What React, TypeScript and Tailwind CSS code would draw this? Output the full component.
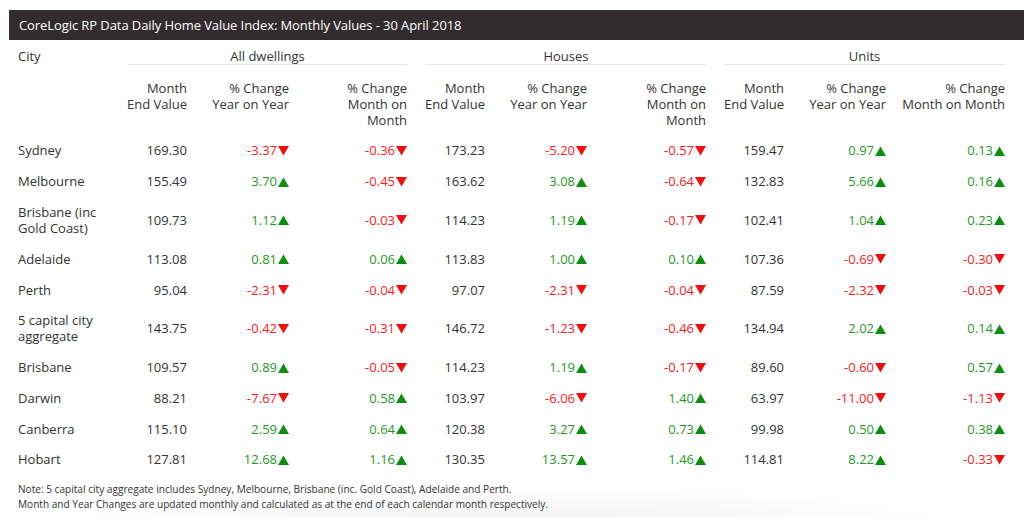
import React from 'react';

type Change = number;
interface Row {
  city: string[];
  all: [number, Change, Change];
  houses: [number, Change, Change];
  units: [number, Change, Change];
}

const rows: Row[] = [
  { city: ['Sydney'], all: [169.3, -3.37, -0.36], houses: [173.23, -5.2, -0.57], units: [159.47, 0.97, 0.13] },
  { city: ['Melbourne'], all: [155.49, 3.7, -0.45], houses: [163.62, 3.08, -0.64], units: [132.83, 5.66, 0.16] },
  { city: ['Brisbane (inc', 'Gold Coast)'], all: [109.73, 1.12, -0.03], houses: [114.23, 1.19, -0.17], units: [102.41, 1.04, 0.23] },
  { city: ['Adelaide'], all: [113.08, 0.81, 0.06], houses: [113.83, 1.0, 0.1], units: [107.36, -0.69, -0.3] },
  { city: ['Perth'], all: [95.04, -2.31, -0.04], houses: [97.07, -2.31, -0.04], units: [87.59, -2.32, -0.03] },
  { city: ['5 capital city', 'aggregate'], all: [143.75, -0.42, -0.31], houses: [146.72, -1.23, -0.46], units: [134.94, 2.02, 0.14] },
  { city: ['Brisbane'], all: [109.57, 0.89, -0.05], houses: [114.23, 1.19, -0.17], units: [89.6, -0.6, 0.57] },
  { city: ['Darwin'], all: [88.21, -7.67, 0.58], houses: [103.97, -6.06, 1.4], units: [63.97, -11.0, -1.13] },
  { city: ['Canberra'], all: [115.1, 2.59, 0.64], houses: [120.38, 3.27, 0.73], units: [99.98, 0.5, 0.38] },
  { city: ['Hobart'], all: [127.81, 12.68, 1.16], houses: [130.35, 13.57, 1.46], units: [114.81, 8.22, -0.33] },
];

const GRID =
  'grid grid-cols-[119px_59px_102px_118px_19px_59px_102px_119px_18px_60px_102px_119px]';

const Arrow = ({ up }: { up: boolean }) => (
  <svg width="11" height="10" viewBox="0 0 11 10" className="inline-block ml-px mb-[2px]">
    {up ? (
      <polygon points="0,10 11,10 5.5,0.5" fill="#0c8f0c" />
    ) : (
      <polygon points="0,0 11,0 5.5,9.5" fill="#f20d0d" />
    )}
  </svg>
);

const ChangeCell = ({ v }: { v: Change }) => {
  const up = v >= 0;
  return (
    <div className={`text-right whitespace-nowrap ${up ? 'text-[#1f9a1f]' : 'text-[#ff1a1a]'}`}>
      {v.toFixed(2)}
      <Arrow up={up} />
    </div>
  );
};

const Group = ({ vals }: { vals: [number, Change, Change] }) => (
  <>
    <div className="text-right">{vals[0].toFixed(2)}</div>
    <ChangeCell v={vals[1]} />
    <ChangeCell v={vals[2]} />
  </>
);

const GroupHead = ({ label }: { label: string }) => (
  <div className="col-span-3 text-center border-b border-[#e6e6e6]">{label}</div>
);

const Head = ({ lines }: { lines: string[] }) => (
  <div className="text-right whitespace-nowrap flex flex-col items-end">
    {lines.map((l) => (
      <span key={l}>{l}</span>
    ))}
  </div>
);

const HeadSet = ({ last }: { last?: boolean }) => (
  <>
    <Head lines={['Month', 'End Value']} />
    <Head lines={['% Change', 'Year on Year']} />
    <Head lines={last ? ['% Change', 'Month on Month'] : ['% Change', 'Month on', 'Month']} />
  </>
);

export default function App() {
  return (
    <div
      className="w-[1024px] h-[517px] overflow-hidden bg-white text-[#333] text-[13px] leading-4"
      style={{ fontFamily: '"Open Sans", "Liberation Sans", sans-serif' }}
    >
      <div className="pl-[9px] pt-[10px]">
        {/* Title bar */}
        <div className="h-[30px] bg-[#322c2e] text-white flex items-center pl-[10px] tracking-[-0.08px]">
          CoreLogic RP Data Daily Home Value Index: Monthly Values - 30 April 2018
        </div>

        {/* Group headers */}
        <div className={`${GRID} pt-2`}>
          <div className="pl-[9px]">City</div>
          <GroupHead label="All dwellings" />
          <div />
          <GroupHead label="Houses" />
          <div />
          <GroupHead label="Units" />
        </div>

        {/* Column headers */}
        <div className={`${GRID} pt-[15px] pb-[7px]`}>
          <div />
          <HeadSet />
          <div />
          <HeadSet />
          <div />
          <HeadSet last />
        </div>

        {/* Data rows */}
        {rows.map((r) => (
          <div key={r.city.join(' ')} className={`${GRID} items-center py-[7.4px]`}>
            <div className="pl-[9px]">
              {r.city.map((c, i) => (
                <div key={i}>{c}</div>
              ))}
            </div>
            <Group vals={r.all} />
            <div />
            <Group vals={r.houses} />
            <div />
            <Group vals={r.units} />
          </div>
        ))}
      </div>

      {/* Notes */}
      <div className="mt-[7px] pl-[18px] pb-4 text-[10.1px] leading-[15px] bg-[radial-gradient(ellipse_at_bottom,#f0f0f0_0%,#ffffff_65%)]">
        <p>Note: 5 capital city aggregate includes Sydney, Melbourne, Brisbane (inc. Gold Coast), Adelaide and Perth.</p>
        <p>Month and Year Changes are updated monthly and calculated as at the end of each calendar month respectively.</p>
      </div>
    </div>
  );
}
